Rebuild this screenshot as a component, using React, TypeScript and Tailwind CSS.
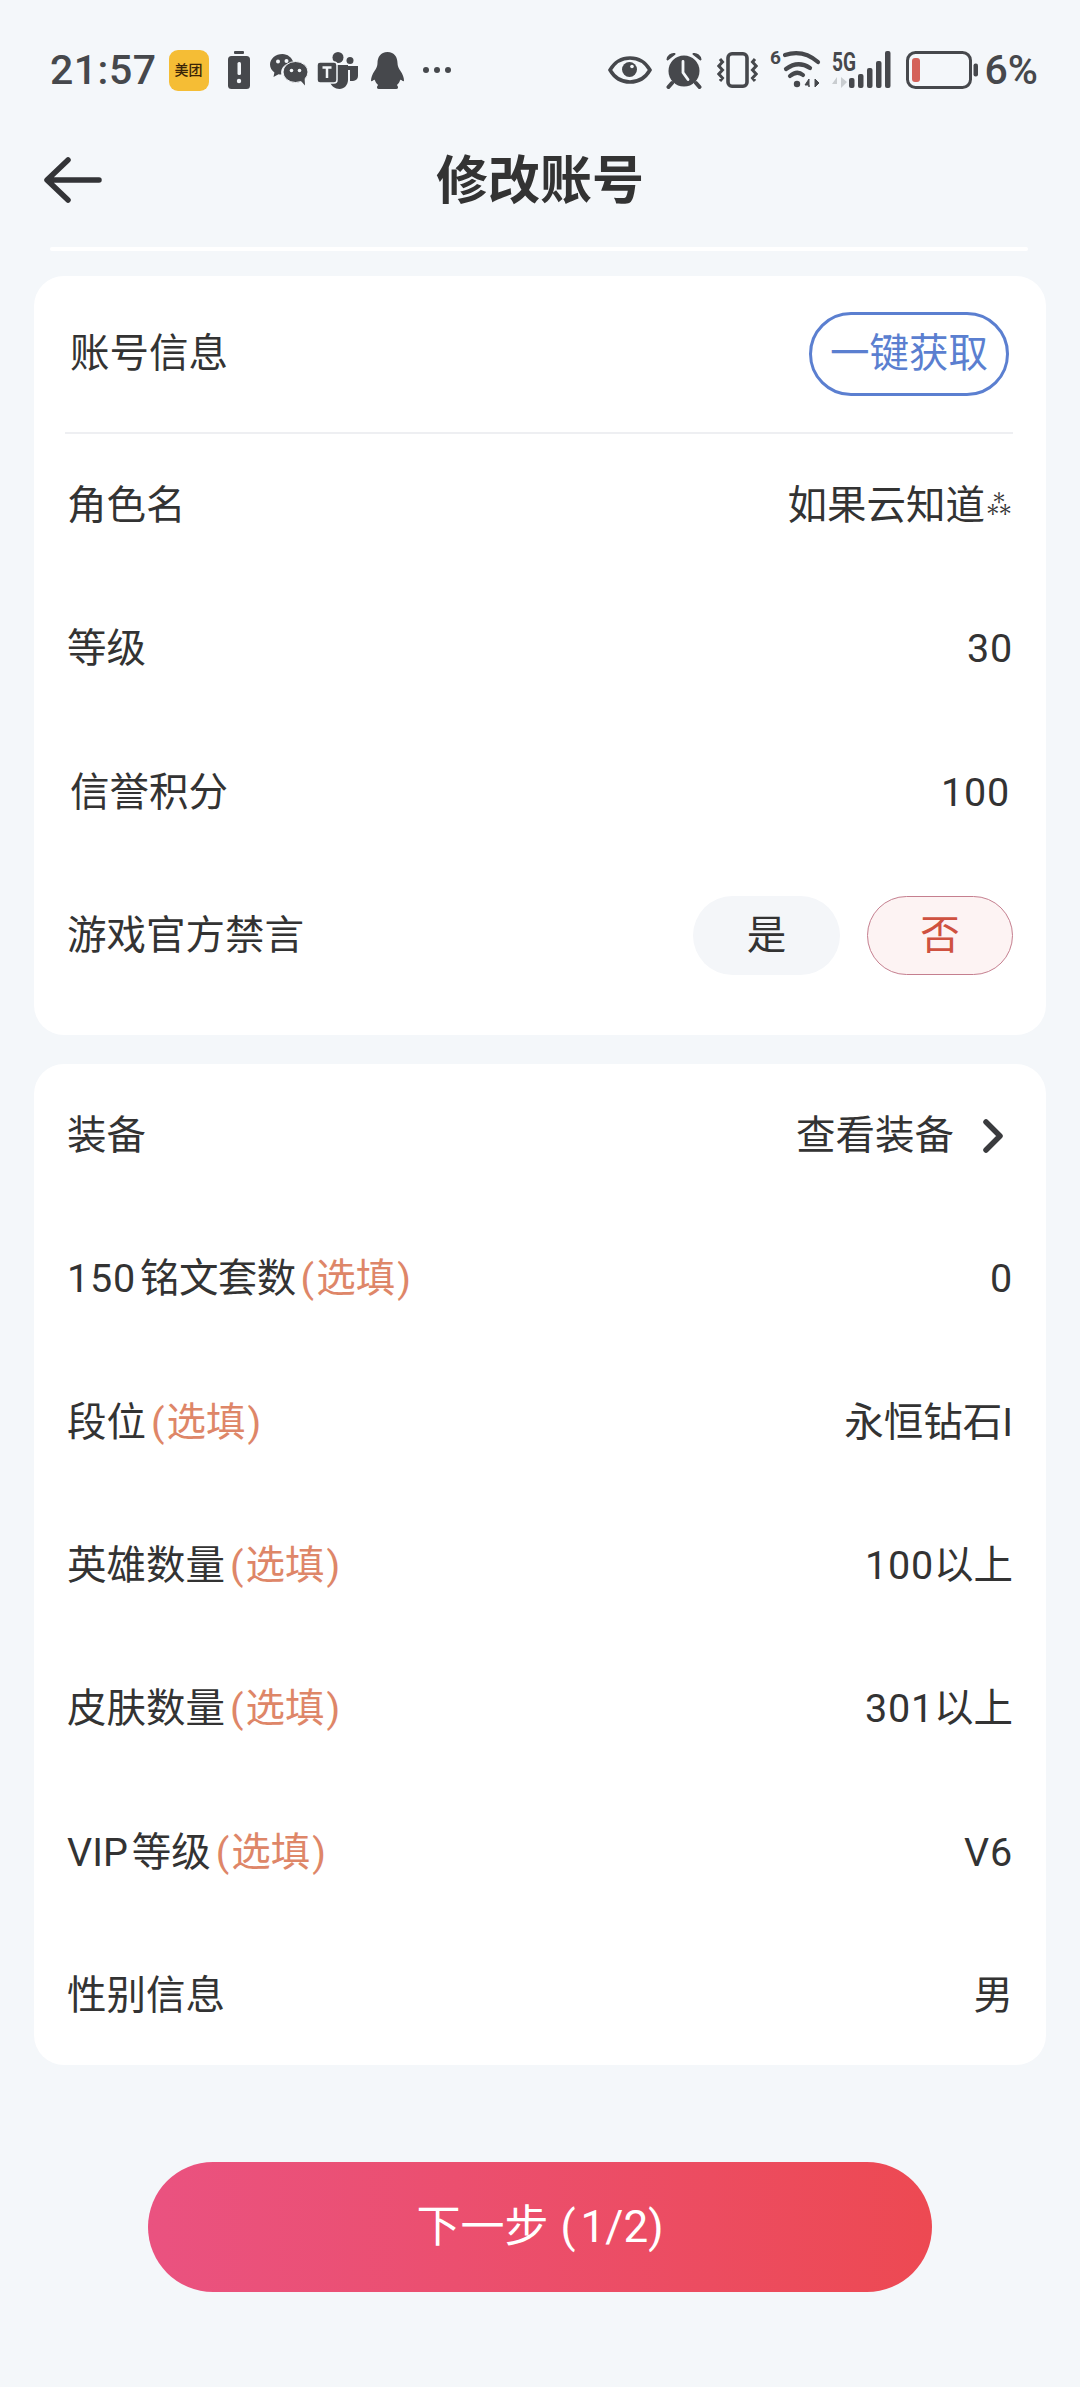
const F = "font-['Roboto','Noto_Sans_CJK_SC',sans-serif]";
const C = "#46484c";
const BG = "#f4f7fa";

function Num({ children }: { children: React.ReactNode }) {
  return <span className="tracking-[0.8px]">{children}</span>;
}

function Row({ label, opt, right, tight }: { label: React.ReactNode; opt?: boolean; right: React.ReactNode; tight?: boolean }) {
  return (
    <div className={`-mx-[34px] flex h-[143.3px] items-center justify-between ${tight ? "px-[70px]" : "px-[67px]"} text-[39.5px] text-[#333333]`}>
      <div className="flex items-center whitespace-nowrap">
        {label}
        {opt && (
          <span className="ml-[5px] flex items-center text-[#de8668]">
            <span className="mr-[2px]">(</span>选填<span className="ml-[2px]">)</span>
          </span>
        )}
      </div>
      <div className="flex items-center whitespace-nowrap">{right}</div>
    </div>
  );
}

function StatusLeft() {
  return (
    <div className="flex items-center">
      <span className="text-[41px] leading-none font-medium tracking-[0.5px] text-[#46484c]">21:57</span>
      <div className="ml-[12px] flex h-[41px] w-[40px] items-center justify-center rounded-[9px] bg-[#f5bd35] text-[14px] leading-none font-medium whitespace-nowrap text-[#3a2408]">美团</div>
      <svg className="ml-[19px]" width="22" height="38" viewBox="0 0 22 38">
        <rect x="6" y="0" width="10" height="3" rx="1" fill={C} />
        <rect x="0" y="5" width="22" height="33" rx="3.5" fill={C} />
        <rect x="9.5" y="11" width="3.5" height="13" rx="1.5" fill={BG} />
        <circle cx="11" cy="30" r="2.2" fill={BG} />
      </svg>
      <svg className="ml-[20px]" width="38" height="32" viewBox="0 0 38 32">
        <path d="M12.500 0C5.600 0 0 4.700 0 10.500c0 3.200 1.700 6 4.400 8L3.500 23l5-2.800c.9.200 1.800.4 2.800.4C10 13.500 15.500 8.600 23.500 8.500 21.800 3.500 17.600 0 12.500 0z" fill={C} />
        <circle cx="8" cy="7.500" r="2" fill={BG} />
        <circle cx="16.500" cy="7" r="2" fill={BG} />
        <ellipse cx="25.500" cy="18" rx="12.500" ry="10.500" fill={C} stroke={BG} strokeWidth="1" />
        <path d="M30 26l5 5.500-.5-8z" fill={C} />
        <circle cx="21.500" cy="16.500" r="1.800" fill={BG} />
        <circle cx="29.500" cy="16.500" r="1.800" fill={BG} />
      </svg>
      <svg className="ml-[9px]" width="41" height="37" viewBox="0 0 41 37">
        <circle cx="21" cy="5.500" r="5.500" fill={C} />
        <circle cx="33" cy="8.500" r="3.500" fill={C} />
        <path d="M29 14h12v10a5 5 0 0 1-5 5h-3V18h-4z" fill={C} />
        <path d="M14 13h17v15c0 5-4 9-8.500 9S14 34 13 30z" fill={C} />
        <rect x="0" y="10" width="20" height="21" rx="3" fill={C} stroke={BG} strokeWidth="1.500" />
        <path d="M5.500 15.500h9M10 15.500V26" stroke={BG} strokeWidth="2.500" />
      </svg>
      <svg className="ml-[13px]" width="33" height="37" viewBox="0 0 33 37">
        <path d="M16.500 0C9.500 0 6.500 5.500 6.500 11c0 3-1 5-3 8C1.500 22 0 25.500 0 28.500c0 1 1 1 2.300-.3 1-1 1.500-.5 2 1 .5 1.500 1.500 2.800 3 3.800-1 .8-1.300 1.500-1.300 2.500 0 1 1 1.500 3 1.500h15c2 0 3-.5 3-1.500 0-1-.3-1.700-1.300-2.500 1.500-1 2.500-2.300 3-3.800.5-1.500 1-2 2-1 1.300 1.300 2.300 1.300 2.300.3 0-3-1.500-6.500-3.500-9.500-2-3-3-5-3-8C26.500 5.500 23.500 0 16.500 0z" fill={C} />
      </svg>
      <div className="ml-[19px] flex gap-[5px]">
        <span className="h-[6px] w-[6px] rounded-full bg-[#46484c]" />
        <span className="h-[6px] w-[6px] rounded-full bg-[#46484c]" />
        <span className="h-[6px] w-[6px] rounded-full bg-[#46484c]" />
      </div>
    </div>
  );
}

function StatusRight() {
  return (
    <div className="flex items-center">
      <svg width="44" height="28" viewBox="0 0 44 28">
        <path d="M2 14C7 5.500 14 2 22 2s15 3.500 20 12c-5 8.500-12 12-20 12S7 22.500 2 14z" fill="none" stroke={C} strokeWidth="3.500" />
        <circle cx="21.500" cy="13.500" r="7.500" fill={C} />
        <circle cx="24" cy="10.500" r="1.800" fill={BG} />
      </svg>
      <svg className="ml-[13px]" width="38" height="38" viewBox="0 0 38 38">
        <circle cx="19" cy="20" r="15.500" fill={C} />
        <path d="M2.500 8.500C3 5 6 2.500 9.500 3zM35.500 8.500C35 5 32 2.500 28.500 3z" fill={C} stroke={C} strokeWidth="2" strokeLinejoin="round" />
        <path d="M7 32 3.500 36M31 32l3.500 4" stroke={C} strokeWidth="4" strokeLinecap="round" />
        <path d="M18 10.500v11l5 7" stroke={BG} strokeWidth="2.800" fill="none" strokeLinecap="round" />
      </svg>
      <svg className="ml-[14px]" width="41" height="36" viewBox="0 0 41 36">
        <rect x="11" y="1.800" width="19" height="32.400" rx="4" fill="none" stroke={C} strokeWidth="3.600" />
        <path d="M3 7 5.500 10 1.800 14 5.500 18 1.800 22 5.500 26 3 29M38 7 35.500 10 39.200 14 35.500 18 39.200 22 35.500 26 38 29" fill="none" stroke={C} strokeWidth="3" />
      </svg>
      <svg className="ml-[12px] overflow-visible" width="52" height="40" viewBox="0 0 52 40">
        <text x="0" y="14" fontSize="19" fontWeight="700" fill={C} fontFamily="Roboto">6</text>
        <path d="M15 5Q33-1 48 12" fill="none" stroke={C} strokeWidth="4.200" strokeLinecap="round" />
        <path d="M16 19Q28 10 40 18" fill="none" stroke={C} strokeWidth="4.200" strokeLinecap="round" />
        <path d="M20 26Q27 20 33 25" fill="none" stroke={C} strokeWidth="4.200" strokeLinecap="round" />
        <circle cx="27" cy="34" r="3.200" fill={C} />
        <path d="M39 37v-8l-4 6h4zM45 29v8l4-4z" fill={C} stroke={C} strokeWidth="1" />
      </svg>
      <svg className="ml-[9px] overflow-visible" width="60" height="38" viewBox="0 0 60 38">
        <text x="1" y="20" fontSize="25" fontWeight="700" fill={C} fontFamily="Roboto" textLength="24" lengthAdjust="spacingAndGlyphs">5G</text>
        <path d="M6 37v-11l-5 7h5zM10 26v11l6-6z" fill="#c9cdd0" />
        <rect x="18" y="27" width="5.500" height="10" rx="2" fill={C} />
        <rect x="27" y="23" width="5.500" height="14" rx="2" fill={C} />
        <rect x="36" y="17" width="5.500" height="20" rx="2" fill={C} />
        <rect x="45" y="10" width="5.500" height="27" rx="2" fill={C} />
        <rect x="54" y="0" width="5.500" height="37" rx="2" fill={C} />
      </svg>
      <svg className="ml-[15px]" width="72" height="38" viewBox="0 0 72 38">
        <rect x="1.500" y="1.500" width="63" height="35" rx="8" fill="none" stroke={C} strokeWidth="3" />
        <rect x="6" y="7" width="8" height="24" rx="3" fill="#d4625a" />
        <rect x="67.500" y="12.500" width="4.500" height="13" rx="2" fill={C} />
      </svg>
      <span className="ml-[7px] text-[41px] leading-none font-medium text-[#46484c]">6%</span>
    </div>
  );
}

export default function App() {
  return (
    <div className={`${F} min-h-[2387px] w-[1080px] overflow-hidden bg-[#f4f7fa]`}>
      <div className="flex h-[140px] items-center justify-between pr-[42px] pl-[50px]">
        <StatusLeft />
        <StatusRight />
      </div>
      <div className="relative flex h-[84px] items-center justify-center">
        <svg className="absolute top-[17px] left-[44px]" width="58" height="46" viewBox="0 0 58 46">
          <path d="M24 3 3 23l21 20M5 23h50" fill="none" stroke="#333437" strokeWidth="5.500" strokeLinecap="round" strokeLinejoin="round" />
        </svg>
        <h1 className="text-[52px] leading-none font-bold text-[#333333]">修改账号</h1>
      </div>
      <div className="mt-[23px] mr-[52px] ml-[50px] h-[4px] rounded-full bg-white" />

      <div className="mx-[34px] mt-[25px] h-[759px] rounded-[30px] bg-white">
        <div className="mr-[33px] ml-[31px] flex h-[158px] items-center justify-between border-b-2 border-[#eeeff2]">
          <span className="ml-[5px] text-[39.5px] text-[#333333]">账号信息</span>
          <div className="mr-[4px] flex h-[84px] w-[200px] items-center justify-center rounded-full border-[3px] border-[#5b7fd0] text-[39.5px] text-[#5b7fd0]">一键获取</div>
        </div>
        <Row label="角色名" right={<>如果云知道<span className="text-[28px] leading-none">⁂</span></>} />
        <Row label="等级" right={<Num>30</Num>} />
        <Row tight label="信誉积分" right={<Num>100</Num>} />
        <Row
          label="游戏官方禁言"
          right={
            <div className="flex gap-[27px]">
              <div className="flex h-[79px] w-[147px] items-center justify-center rounded-full bg-[#f4f6f9] text-[#333333]">是</div>
              <div className="flex h-[79px] w-[146px] items-center justify-center rounded-full border border-[#c57f8f] bg-[#fdf3f3] text-[#cf5140]">否</div>
            </div>
          }
        />
      </div>

      <div className="mx-[34px] mt-[29px] h-[1001px] rounded-[30px] bg-white">
        <Row
          label="装备"
          right={
            <>
              查看装备
              <svg className="mr-[9px] ml-[28px]" width="22" height="36" viewBox="0 0 22 36">
                <path d="M4 4 18 18 4 32" fill="none" stroke="#3a3b3e" strokeWidth="5.500" strokeLinecap="round" strokeLinejoin="round" />
              </svg>
            </>
          }
        />
        <Row label={<><Num>150</Num><span className="ml-[4px] tracking-[-0.6px]">铭文套数</span></>} opt right={<Num>0</Num>} />
        <Row label="段位" opt right="永恒钻石I" />
        <Row label="英雄数量" opt right={<><Num>100</Num>以上</>} />
        <Row label="皮肤数量" opt right={<><Num>301</Num>以上</>} />
        <Row label={<><span>VIP</span><span className="ml-[4px]">等级</span></>} opt right={<Num>V6</Num>} />
        <Row label="性别信息" right="男" />
      </div>

      <div className="mx-[148px] mt-[97px] flex h-[130px] items-center justify-center rounded-full bg-gradient-to-r from-[#ea5280] to-[#ed4952] text-[44px] text-white">
        下一步<span className="ml-[12px]">(</span><span className="ml-[5px]">1/2)</span>
      </div>
    </div>
  );
}
